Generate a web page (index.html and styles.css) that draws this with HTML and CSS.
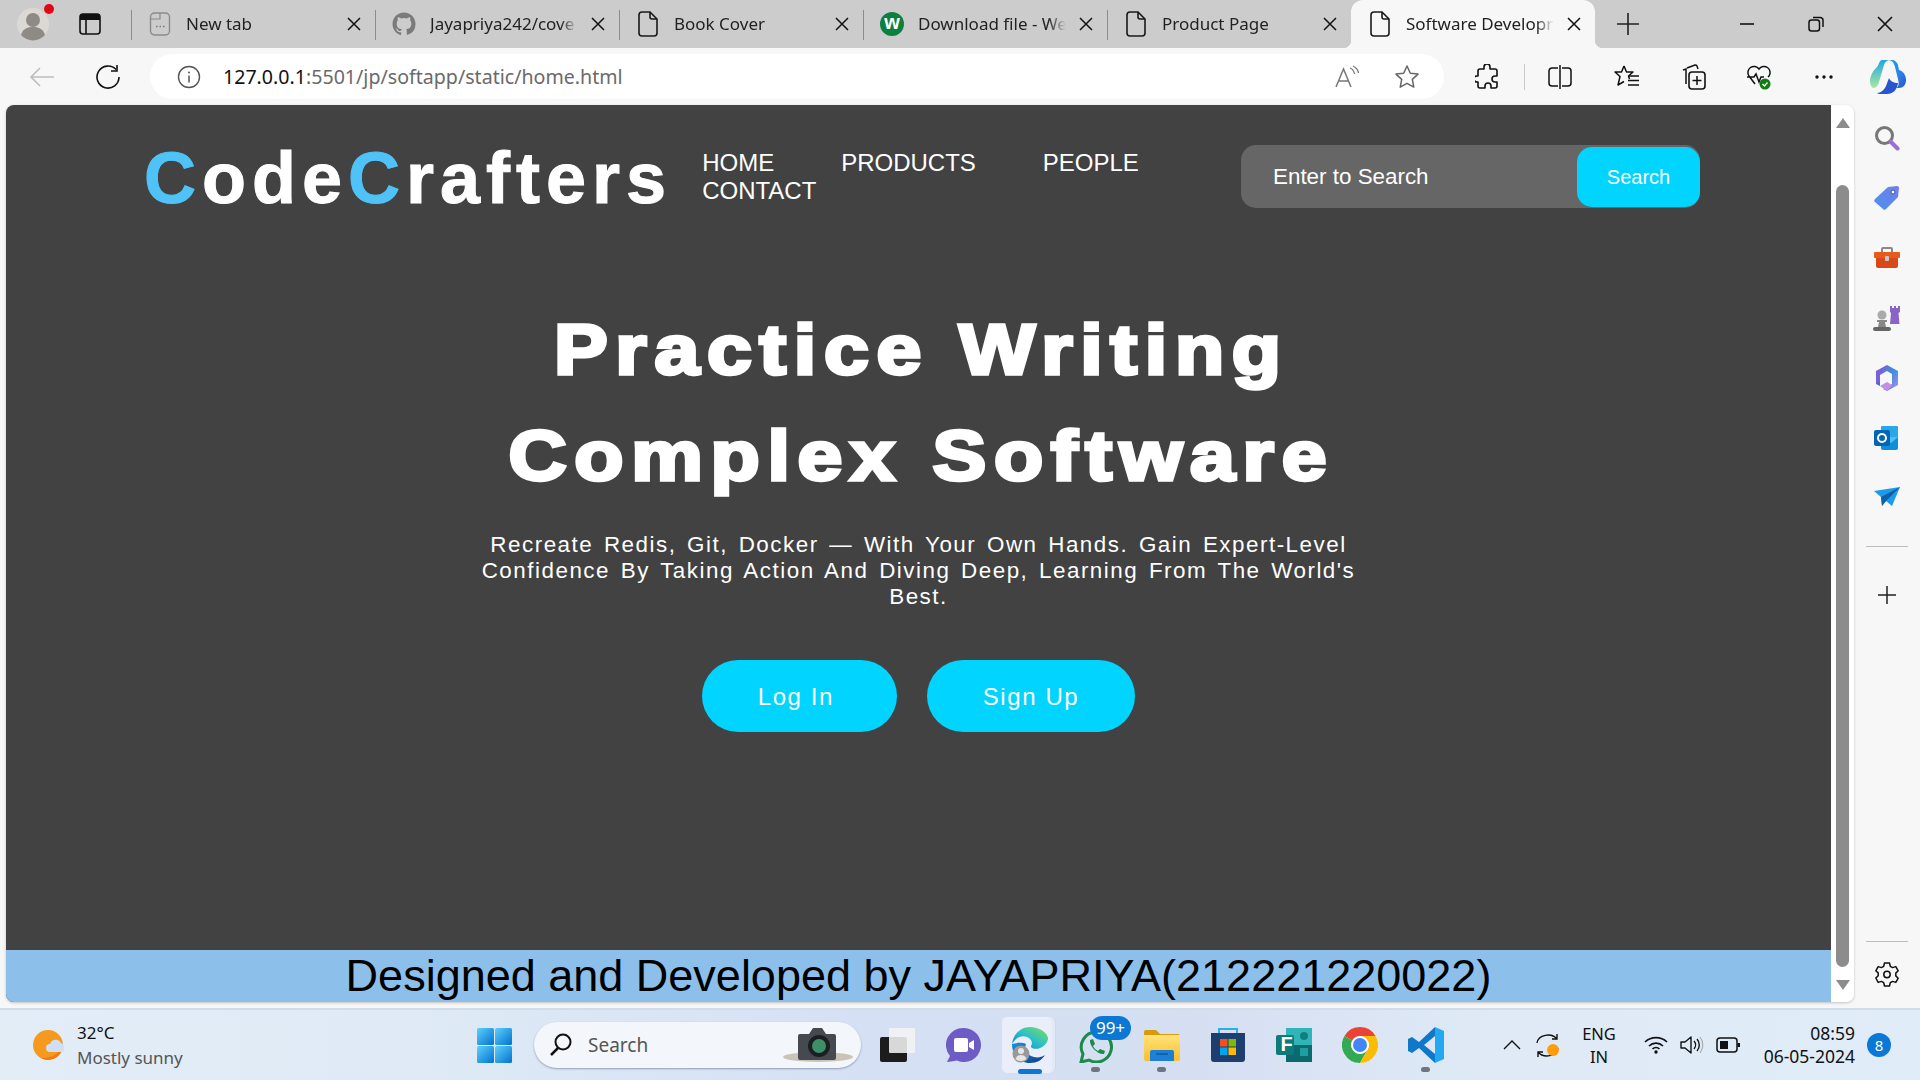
FILE: index.html
```html
<!DOCTYPE html>
<html lang="en">
<head>
    <meta charset="UTF-8">
    <title>Software Development</title>
    <link rel="stylesheet" href="styles.css">
</head>
<body>
    <svg class="defs" width="0" height="0">
        <defs>
            <symbol id="doc" viewBox="0 0 22 26"><path d="M5 1h8l7 7v14a3 3 0 0 1-3 3H5a3 3 0 0 1-3-3V4a3 3 0 0 1 3-3zM13 1v5a2 2 0 0 0 2 2h5" fill="none" stroke="#1a1a1a" stroke-width="1.6"/></symbol>
            <symbol id="close" viewBox="0 0 14 14"><path d="M1 1l12 12M13 1L1 13" fill="none" stroke="#111" stroke-width="1.5"/></symbol>
            <linearGradient id="edgeTop" x1="0" y1="1" x2="1" y2="0"><stop offset="0" stop-color="#0b7fd0"/><stop offset=".5" stop-color="#2cc0c8"/><stop offset="1" stop-color="#7fe05a"/></linearGradient>
            <linearGradient id="edgeLow" x1="0" y1="0" x2="1" y2="1"><stop offset="0" stop-color="#1a90e0"/><stop offset="1" stop-color="#0a3d8c"/></linearGradient>
            <linearGradient id="winBlue" x1="0" y1="0" x2="1" y2="1"><stop offset="0" stop-color="#5fd0fb"/><stop offset="1" stop-color="#0072d0"/></linearGradient>
            <linearGradient id="copilot" x1="0" y1="0" x2="1" y2="1"><stop offset="0" stop-color="#1aa6e8"/><stop offset=".6" stop-color="#2f7fe8"/><stop offset="1" stop-color="#2a4fc8"/></linearGradient>
            <linearGradient id="copilotGreen" x1="0" y1="0" x2="0" y2="1"><stop offset="0" stop-color="#22a8e0"/><stop offset="1" stop-color="#a8e8a0"/></linearGradient>
            <linearGradient id="m365" x1="0" y1="0" x2="1" y2="1"><stop offset="0" stop-color="#7a5fd8"/><stop offset=".5" stop-color="#3f8fe0"/><stop offset="1" stop-color="#b48ae8"/></linearGradient>
            <linearGradient id="tagBlue" x1="0" y1="1" x2="1" y2="0"><stop offset="0" stop-color="#4f8ff0"/><stop offset="1" stop-color="#6f7fe8"/></linearGradient>
            <linearGradient id="folder" x1="0" y1="0" x2="0" y2="1"><stop offset="0" stop-color="#ffe27a"/><stop offset="1" stop-color="#fbc02d"/></linearGradient>
        </defs>
    </svg>

    <div class="tabstrip">
        <div class="avatar">
            <svg width="34" height="34" viewBox="0 0 34 34"><circle cx="17" cy="17" r="16" fill="#dcd8d4"/><circle cx="17" cy="13" r="7" fill="#8e8a85"/><path d="M5 28c2-7 7-8 12-8s10 1 12 8a16 16 0 0 1-24 0z" fill="#8e8a85"/></svg>
            <span class="avatar-dot"></span>
        </div>
        <svg class="tab-actions" width="22" height="22" viewBox="0 0 22 22"><rect x="1" y="1" width="20" height="20" rx="3" fill="none" stroke="#111" stroke-width="1.6"/><path d="M1 4a3 3 0 0 1 3-3h14a3 3 0 0 1 3 3v3H1z" fill="#111"/><path d="M7 7v14" stroke="#111" stroke-width="1.6"/></svg>
        <div class="tabs">
            <div class="tab">
                <svg class="fav" width="22" height="26" viewBox="0 0 22 26"><rect x="1.5" y="2" width="19" height="22" rx="4" fill="none" stroke="#8a8a8a" stroke-width="1.4"/><path d="M2 8h9V2" fill="none" stroke="#8a8a8a" stroke-width="1.2"/><path d="M7 15.5h1.5M10.500 15.500h1.500M14 15.500h1.500" stroke="#777" stroke-width="1.5"/></svg>
                <span class="tab-title">New tab</span>
                <svg class="tab-close"><use href="#close"/></svg>
            </div>
            <div class="tab">
                <svg class="fav" width="24" height="24" viewBox="0 0 24 24"><path fill="#7a7a7a" d="M12 .5C5.65.5.5 5.65.5 12c0 5.080 3.290 9.390 7.860 10.910.570.100.780-.250.780-.550v-2.140c-3.200.700-3.870-1.360-3.870-1.360-.520-1.330-1.280-1.680-1.280-1.680-1.040-.710.080-.700.080-.700 1.150.080 1.760 1.180 1.760 1.180 1.030 1.750 2.690 1.250 3.350.950.100-.740.400-1.250.730-1.540-2.550-.290-5.240-1.280-5.240-5.690 0-1.260.450-2.280 1.180-3.090-.120-.290-.510-1.460.110-3.050 0 0 .970-.310 3.160 1.180a11 11 0 0 1 5.760 0c2.190-1.490 3.160-1.180 3.160-1.180.620 1.590.230 2.760.110 3.050.740.810 1.180 1.830 1.180 3.090 0 4.420-2.690 5.390-5.250 5.680.410.360.780 1.050.780 2.120v3.140c0 .310.210.660.790.550A11.500 11.500 0 0 0 23.500 12C23.500 5.650 18.350.5 12 .5z"/></svg>
                <span class="tab-title">Jayapriya242/cove</span>
                <svg class="tab-close"><use href="#close"/></svg>
            </div>
            <div class="tab">
                <svg class="fav" width="22" height="26"><use href="#doc"/></svg>
                <span class="tab-title">Book Cover</span>
                <svg class="tab-close"><use href="#close"/></svg>
            </div>
            <div class="tab">
                <span class="fav wfav">w</span>
                <span class="tab-title">Download file - We</span>
                <svg class="tab-close"><use href="#close"/></svg>
            </div>
            <div class="tab">
                <svg class="fav" width="22" height="26"><use href="#doc"/></svg>
                <span class="tab-title">Product Page</span>
                <svg class="tab-close"><use href="#close"/></svg>
            </div>
            <div class="tab active">
                <svg class="fav" width="22" height="26"><use href="#doc"/></svg>
                <span class="tab-title">Software Developr</span>
                <svg class="tab-close"><use href="#close"/></svg>
            </div>
        </div>
        <svg class="new-tab" width="22" height="22" viewBox="0 0 22 22"><path d="M11 0v22M0 11h22" stroke="#222" stroke-width="1.6"/></svg>
        <div class="win-controls">
            <svg width="16" height="16" viewBox="0 0 16 16"><path d="M1 8h14" stroke="#111" stroke-width="1.6"/></svg>
            <svg width="16" height="16" viewBox="0 0 16 16"><rect x="1" y="4" width="10.500" height="11" rx="2.500" fill="none" stroke="#111" stroke-width="1.500"/><path d="M5 1.500h7a3 3 0 0 1 3 3V11" fill="none" stroke="#111" stroke-width="1.500"/></svg>
            <svg width="16" height="16" viewBox="0 0 16 16"><path d="M1 1l14 14M15 1L1 15" stroke="#111" stroke-width="1.600"/></svg>
        </div>
    </div>

    <div class="toolbar">
        <svg class="tool-back" width="26" height="22" viewBox="0 0 26 22"><path d="M25 11H2M11 2l-9 9 9 9" fill="none" stroke="#bdbdbd" stroke-width="1.600"/></svg>
        <svg class="tool-reload" width="26" height="26" viewBox="0 0 26 26"><path d="M21 5.500A11 11 0 1 0 24 13" fill="none" stroke="#111" stroke-width="1.600"/><path d="M22 1v6h-6" fill="none" stroke="#111" stroke-width="1.600"/></svg>
        <div class="addressbar">
            <svg width="24" height="24" viewBox="0 0 24 24"><circle cx="12" cy="12" r="10.500" fill="none" stroke="#555" stroke-width="1.400"/><path d="M12 10.500v7" stroke="#555" stroke-width="1.500"/><circle cx="12" cy="7.500" r="1" fill="#555"/></svg>
            <span class="url"><span class="url-host">127.0.0.1</span>:5501/jp/softapp/static/home.html</span>
            <svg class="read-aloud" width="26" height="24" viewBox="0 0 26 24"><path d="M2 22L9.500 4 17 22M4.500 16h10" fill="none" stroke="#777" stroke-width="1.500"/><path d="M16 3c3 1 4 3 4.500 6M19 1c3 1.500 5 4 5.500 7" fill="none" stroke="#777" stroke-width="1.300"/></svg>
            <svg class="star" width="26" height="26" viewBox="0 0 26 26"><path d="M13 2l3.300 7.200 7.700.9-5.700 5.300 1.500 7.700L13 19.300l-6.800 3.800 1.500-7.700L2 10.100l7.700-.9z" fill="none" stroke="#666" stroke-width="1.500" stroke-linejoin="round"/></svg>
        </div>
        <div class="tool-icons">
            <svg class="ti-ext" width="24" height="26" viewBox="0 0 24 26"><path d="M9 3a3 3 0 0 1 6 0v2h5a2 2 0 0 1 2 2v5h-2a3 3 0 0 0 0 6h2v4a2 2 0 0 1-2 2h-4v-2a3 3 0 0 0-6 0v2H5a2 2 0 0 1-2-2v-4h-1a3 3 0 0 1 0-6h1V7a2 2 0 0 1 2-2h4z" fill="none" stroke="#111" stroke-width="1.600" stroke-linejoin="round"/></svg>
            <span class="tool-sep"></span>
            <svg class="ti-split" width="24" height="26" viewBox="0 0 24 26"><path d="M10 4H4a3 3 0 0 0-3 3v12a3 3 0 0 0 3 3h6M14 4h6a3 3 0 0 1 3 3v12a3 3 0 0 1-3 3h-6M12 1v24" fill="none" stroke="#111" stroke-width="1.500"/></svg>
            <svg class="ti-fav" width="26" height="26" viewBox="0 0 26 26"><path d="M10 2l2.500 6H19l-4.500 4 1 3M10 2L7.500 8H1l5 4.500L4 21l6-3.500" fill="none" stroke="#111" stroke-width="1.500" stroke-linejoin="round"/><path d="M15 12h10M14 16.500h11M14 21h11" stroke="#111" stroke-width="1.500"/></svg>
            <svg class="ti-coll" width="26" height="28" viewBox="0 0 26 28"><path d="M7 5l8-3a2 2 0 0 1 2 1l1 3M3 7l3-1v15" fill="none" stroke="#111" stroke-width="1.500"/><rect x="9" y="9" width="16" height="17" rx="3" fill="none" stroke="#111" stroke-width="1.600"/><path d="M17 13v9M12.500 17.500h9" stroke="#111" stroke-width="1.500"/></svg>
            <svg class="ti-health" width="26" height="28" viewBox="0 0 26 28"><path d="M9 21L3 13a6 6 0 0 1 10-7 6 6 0 0 1 10 7l-1 1M1 14h7l2-3 3 8 2-5h3" fill="none" stroke="#111" stroke-width="1.500"/><circle cx="19" cy="21" r="5.500" fill="#107c10"/><path d="M16.500 21l2 2 3-3.500" fill="none" stroke="#fff" stroke-width="1.300"/></svg>
            <svg class="ti-more" width="18" height="4" viewBox="0 0 18 4"><circle cx="2" cy="2" r="1.700" fill="#111"/><circle cx="9" cy="2" r="1.700" fill="#111"/><circle cx="16" cy="2" r="1.700" fill="#111"/></svg>
            <svg class="ti-copilot" width="36" height="36" viewBox="0 0 36 36"><path d="M18 1h4c3 0 5 2 6 5l1 5c4 1 7 5 7 10 0 5-3 8-7 8h-3c3-1 3-5 2-9l-3-12c-1-4-3-7-7-7z" fill="url(#copilot)"/><path d="M7 34c4 0 7-3 9-7l3-8c1 3 5 5 9 5-1 7-5 11-11 11H9z" fill="#2a55d0"/><path d="M12 1h8c-3 0-5 2-6 5l-5 17c-1 4-3 6-6 6-2-1-3-4-3-7 0-5 3-10 6-13 3-2 3-8 6-8z" fill="url(#copilotGreen)"/></svg>
        </div>
    </div>

    <div class="main">
        <div class="viewport">
            <div class="page">
                <header class="site-header">
                    <div class="logo"><span class="logo-c">C</span>ode<span class="logo-c">C</span>rafters</div>
                    <nav class="site-nav">
                        <a>HOME</a>
                        <a>PRODUCTS</a>
                        <a>PEOPLE</a>
                        <a>CONTACT</a>
                    </nav>
                    <form class="search-box">
                        <span class="search-input">Enter to Search</span>
                        <button type="button" class="search-btn">Search</button>
                    </form>
                </header>
                <section class="hero">
                    <h1>Practice Writing<br>Complex Software</h1>
                    <p>Recreate Redis, Git, Docker — With Your Own Hands. Gain Expert-Level Confidence By Taking Action And Diving Deep, Learning From The World's Best.</p>
                    <div class="hero-btns">
                        <button type="button" class="hero-btn login-btn">Log In</button>
                        <button type="button" class="hero-btn">Sign Up</button>
                    </div>
                </section>
                <footer class="site-footer">Designed and Developed by JAYAPRIYA(212221220022)</footer>
            </div>
            <div class="scrollbar">
                <span class="arrow-up"></span>
                <span class="thumb"></span>
                <span class="arrow-down"></span>
            </div>
        </div>
        <aside class="sidebar">
            <svg class="side-icon" width="26" height="26" viewBox="0 0 26 26"><circle cx="10.500" cy="10.500" r="8" fill="none" stroke="#777" stroke-width="3"/><path d="M16.500 16.500l7 7" stroke="#9a6fd8" stroke-width="4" stroke-linecap="round"/></svg>
            <svg class="side-icon" width="26" height="26" viewBox="0 0 26 26"><path d="M14 2l9-1a2 2 0 0 1 2 2l-1 9-12 12a2 2 0 0 1-3 0L1 17a2 2 0 0 1 0-3z" fill="url(#tagBlue)"/><circle cx="19" cy="7" r="2" fill="#fff" stroke="#3a4fb0"/></svg>
            <svg class="side-icon" width="28" height="24" viewBox="0 0 28 24"><path d="M9 6V3a1 1 0 0 1 1-1h8a1 1 0 0 1 1 1v3" fill="none" stroke="#8a8a8a" stroke-width="2"/><rect x="1" y="6" width="26" height="6" rx="1" fill="#e85a1c"/><path d="M3 12h22v8a2 2 0 0 1-2 2H5a2 2 0 0 1-2-2z" fill="#d8481a"/><rect x="12" y="10" width="4" height="5" rx="1" fill="#c8c8c8"/></svg>
            <svg class="side-icon" width="28" height="28" viewBox="0 0 28 28"><path d="M17 2h2v2h2V2h2v2h2V2h2v6l-1.500 1 1 11H17l1-11L17 8z" fill="#8a63c8"/><circle cx="9" cy="11" r="4.500" fill="#aaa"/><path d="M4 16h10v2H12l1 5H5l1-5H4z" fill="#888"/><rect x="0" y="23" width="18" height="4" rx="2" fill="#666"/></svg>
            <svg class="side-icon" width="26" height="28" viewBox="0 0 26 28"><path d="M13 1l11 6v14l-11 6-4-2 9-5V10L13 7 6 11V6z" fill="url(#m365)"/><path d="M2 7l4-1v16l-4-2z" fill="#3f6fd8"/><path d="M6 22l7-4 5 3-5 6z" fill="#c090e8"/><path d="M13 1L2 7v13l4-2V9z" fill="#7a5fd8"/></svg>
            <svg class="side-icon" width="26" height="26" viewBox="0 0 26 26"><rect x="7" y="1" width="17" height="12" rx="1" fill="#28a8ea"/><path d="M7 12h17v11a2 2 0 0 1-2 2H9a2 2 0 0 1-2-2z" fill="#0f8fd8"/><path d="M7 12l10 6 7-6" fill="#50c0f0"/><rect x="0" y="5" width="16" height="16" rx="2" fill="#0364b8"/><circle cx="8" cy="13" r="4" fill="none" stroke="#fff" stroke-width="2"/></svg>
            <svg class="side-icon" width="26" height="22" viewBox="0 0 26 22"><path d="M0 4l26-4-8 19-6-5-4 5-1-9z" fill="#1e9be8"/><path d="M7 10L26 0 12 14l-4 5z" fill="#0f5fa8"/></svg>
            <span class="side-sep"></span>
            <svg class="side-icon side-plus" width="18" height="18" viewBox="0 0 18 18"><path d="M9 0v18M0 9h18" stroke="#222" stroke-width="1.500"/></svg>
            <span class="side-sep side-sep-low"></span>
            <svg class="side-gear" width="24" height="26" viewBox="0 0 24 26"><path d="M9.500 1h5l.8 3.300 2.300 1.300 3.200-1 2.400 4.200-2.400 2.300v2.800l2.400 2.300-2.400 4.200-3.200-1-2.300 1.300-.8 3.300h-5l-.8-3.300-2.300-1.300-3.200 1L.8 16l2.400-2.300v-2.800L.8 8.800l2.400-4.200 3.200 1 2.300-1.300z" fill="none" stroke="#111" stroke-width="1.500" stroke-linejoin="round"/><circle cx="12" cy="12.500" r="3.200" fill="none" stroke="#111" stroke-width="1.500"/></svg>
        </aside>
    </div>

    <div class="taskbar">
        <div class="weather">
            <svg width="33" height="30" viewBox="0 0 33 30"><circle cx="15" cy="15" r="15" fill="#f59a1e"/><path d="M30 15a15 15 0 0 1-15 15A15 15 0 0 1 8 28c10 1 19-5 22-13z" fill="#f27a10"/><path d="M17 22a4 4 0 0 1 0-8 6 6 0 0 1 11-1 5 5 0 0 1 1 9z" fill="#cfe0f6"/></svg>
            <div class="weather-text">
                <span class="temp">32°C</span>
                <span class="sky">Mostly sunny</span>
            </div>
        </div>
        <svg class="win-logo" width="35" height="35" viewBox="0 0 35 35"><rect width="17" height="17" rx="1.500" fill="url(#winBlue)"/><rect x="18" width="17" height="17" rx="1.500" fill="url(#winBlue)"/><rect y="18" width="17" height="17" rx="1.500" fill="url(#winBlue)"/><rect x="18" y="18" width="17" height="17" rx="1.500" fill="url(#winBlue)"/></svg>
        <div class="task-search">
            <svg width="22" height="24" viewBox="0 0 22 24"><circle cx="13" cy="9" r="7.500" fill="none" stroke="#111" stroke-width="2"/><path d="M8 15l-7 7" stroke="#111" stroke-width="2.500"/></svg>
            <span class="task-search-text">Search</span>
            <svg class="camera" width="70" height="36" viewBox="0 0 70 36"><ellipse cx="35" cy="30" rx="35" ry="5" fill="#c9c3b8"/><path d="M17 7h9l4-6h9l4 6h8a2 2 0 0 1 2 2v22a2 2 0 0 1-2 2H17a2 2 0 0 1-2-2V9a2 2 0 0 1 2-2z" fill="#444a50"/><circle cx="36" cy="19" r="11" fill="#1c1f22"/><circle cx="36" cy="19" r="7" fill="#3d8f68"/></svg>
        </div>
        <div class="apps">
            <div class="app">
                <svg width="36" height="36" viewBox="0 0 36 36"><rect y="10" width="27" height="25" rx="2" fill="#1c1c1c"/><rect x="9" y="1" width="26" height="25" rx="1" fill="#f2f2f2" fill-opacity=".88"/></svg>
            </div>
            <div class="app">
                <svg width="36" height="36" viewBox="0 0 36 36"><path d="M18 1a17 17 0 1 1-7 32.500L2 35c-1 0-1-1 0-2l2-4A17 17 0 0 1 18 1z" fill="#6d5cc4"/><rect x="8" y="11" width="14" height="14" rx="2" fill="#fff"/><path d="M23 16l5-3v10l-5-3z" fill="#fff"/></svg>
            </div>
            <div class="app app-active">
                <svg width="36" height="36" viewBox="0 0 36 36"><path d="M18 0C8 0 1 8 0 17c4-7 10-9 15-7 5 2 6 6 4 9-1 2 5 4 9 2 5-2 8-6 8-10C35 5 27 0 18 0z" fill="url(#edgeTop)"/><path d="M0 17c0 11 8 19 18 19 7 0 12-3 15-8-4 3-10 3-14 1-5-2-7-7-5-12-5-2-11-1-14 0z" fill="url(#edgeLow)"/><circle cx="9" cy="27" r="8.500" fill="#999"/><circle cx="9" cy="24" r="3" fill="#e6e6e6"/><path d="M3.500 32c1-3 3-4 5.500-4s4.500 1 5.500 4a8.500 8.500 0 0 1-11 0z" fill="#e6e6e6"/></svg>
            </div>
            <div class="app app-open">
                <svg width="36" height="36" viewBox="0 0 36 36"><path d="M18 5a15 15 0 1 1-7 28l-8 2 2-8A15 15 0 0 1 18 5z" fill="none" stroke="#1e8a4a" stroke-width="3"/><path d="M12 13l3-1 2 5-2 2c1 2 3 4 5 5l2-2 5 2-1 3c-6 1-15-8-14-14z" fill="#1e8a4a"/></svg>
                <span class="badge-99">99+</span>
            </div>
            <div class="app app-open">
                <svg width="36" height="36" viewBox="0 0 36 36"><path d="M0 5a2 2 0 0 1 2-2h10l4 4h18a2 2 0 0 1 2 2v4H0z" fill="#d79a0a"/><path d="M0 8h36v24a2 2 0 0 1-2 2H2a2 2 0 0 1-2-2z" fill="url(#folder)"/><path d="M6 34V25a2 2 0 0 1 2-2h20a2 2 0 0 1 2 2v9z" fill="#1e7fd6"/><path d="M12 27h12" stroke="#0f5a9e" stroke-width="1.500"/></svg>
            </div>
            <div class="app">
                <svg width="36" height="36" viewBox="0 0 36 36"><path d="M9 6V2h18v4" fill="none" stroke="#2ab0e8" stroke-width="2"/><path d="M1 6h34v26a3 3 0 0 1-3 3H4a3 3 0 0 1-3-3z" fill="#1d3f70"/><rect x="10" y="12" width="7.500" height="7.500" fill="#f25022"/><rect x="18.500" y="12" width="7.500" height="7.500" fill="#7fba00"/><rect x="10" y="20.500" width="7.500" height="7.500" fill="#00a4ef"/><rect x="18.500" y="20.500" width="7.500" height="7.500" fill="#ffb900"/></svg>
            </div>
            <div class="app">
                <svg width="36" height="36" viewBox="0 0 36 36"><rect x="10" y="1" width="26" height="17" fill="#2fb5b8"/><rect x="10" y="18" width="26" height="17" fill="#0b6a6e"/><circle cx="28" cy="9" r="4" fill="#0e7f82"/><rect x="24" y="21" width="8" height="8" fill="#1f9ea0"/><rect y="8" width="18" height="20" rx="2" fill="#0e7a7c"/><text class="forms-f" x="4.500" y="24">F</text></svg>
            </div>
            <div class="app">
                <svg width="36" height="36" viewBox="0 0 36 36"><circle cx="18" cy="18" r="18" fill="#fff"/><path d="M18 0A18 18 0 0 1 33.600 9H18a9 9 0 0 0-7.800 4.500L2.400 9A18 18 0 0 1 18 0z" fill="#ea4335"/><path d="M2.400 9A18 18 0 0 0 18 36l7.800-13.500A9 9 0 0 1 10.200 13.500z" fill="#34a853"/><path d="M33.600 9A18 18 0 0 1 18 36l7.800-13.500A9 9 0 0 0 18 9z" fill="#fbbc05"/><circle cx="18" cy="18" r="7" fill="#4285f4"/></svg>
            </div>
            <div class="app app-open">
                <svg width="36" height="36" viewBox="0 0 36 36"><path d="M27 0L11 15 4 10 0 12v12l4 2 7-5 16 15v-9L16 18l11-9z" fill="#0f78c8"/><path d="M27 0l9 4v28l-9 4z" fill="#23a9f2"/></svg>
            </div>
        </div>
        <div class="tray">
            <svg class="tray-caret" width="18" height="10" viewBox="0 0 18 10"><path d="M1 9l8-8 8 8" fill="none" stroke="#111" stroke-width="1.400"/></svg>
            <svg class="tray-sync" width="26" height="26" viewBox="0 0 26 26"><path d="M2 11a11 9 0 0 1 20-4M22 2v5h-5M23 16a11 9 0 0 1-20 4M3 25v-5h5" fill="none" stroke="#111" stroke-width="1.400"/><circle cx="18" cy="18" r="6" fill="#ff9d0a"/></svg>
            <div class="lang"><span>ENG</span><span>IN</span></div>
            <svg class="tray-wifi" width="24" height="18" viewBox="0 0 24 18"><path d="M1 6a16 16 0 0 1 22 0M5 10a10 10 0 0 1 14 0M8.500 13a5 5 0 0 1 7 0" fill="none" stroke="#111" stroke-width="1.600"/><circle cx="12" cy="16" r="1.700" fill="#111"/></svg>
            <svg class="tray-vol" width="24" height="20" viewBox="0 0 24 20"><path d="M1 7h4l6-5v16l-6-5H1z" fill="none" stroke="#111" stroke-width="1.400" stroke-linejoin="round"/><path d="M14 6a6 6 0 0 1 0 8M17 4a9 9 0 0 1 0 12" fill="none" stroke="#111" stroke-width="1.400"/><path d="M20 2a13 13 0 0 1 0 16" fill="none" stroke="#aaa" stroke-width="1.200"/></svg>
            <svg class="tray-batt" width="24" height="16" viewBox="0 0 24 16"><rect x="1" y="1" width="20" height="14" rx="3" fill="none" stroke="#111" stroke-width="1.500"/><rect x="4" y="4" width="8" height="8" fill="#111"/><rect x="21.500" y="6" width="2.500" height="4" fill="#111"/></svg>
            <div class="clock"><span>08:59</span><span>06-05-2024</span></div>
            <span class="notif">8</span>
        </div>
    </div>
</body>
</html>
```

FILE: styles.css
```css
* {
    margin: 0;
    padding: 0;
    box-sizing: border-box;
}
html, body {
    width: 1920px;
    height: 1080px;
    overflow: hidden;
}
body {
    display: flex;
    flex-direction: column;
    font-family: "Noto Sans", sans-serif;
    color: #111;
    background-color: #f7f7f7;
}
.defs {
    position: absolute;
}

/* tabs */
.tabstrip {
    display: flex;
    align-items: center;
    height: 48px;
    background-color: #cccccc;
    flex: none;
}
.avatar {
    position: relative;
    width: 34px;
    height: 34px;
    margin-left: 16px;
}
.avatar-dot {
    position: absolute;
    top: -3px;
    right: -4px;
    width: 10px;
    height: 10px;
    border-radius: 50%;
    background-color: #e30613;
}
.tab-actions {
    margin-left: 29px;
}
.tabs {
    display: flex;
    align-self: stretch;
    margin-left: 30px;
}
.tab {
    position: relative;
    display: flex;
    align-items: center;
    width: 244px;
    height: 48px;
    padding-left: 17px;
}
.tab::before {
    content: "";
    position: absolute;
    left: 0;
    top: 10px;
    height: 30px;
    width: 1px;
    background-color: #8c8c8c;
}
.tab.active {
    background-color: #f7f7f7;
    border-radius: 12px 12px 0 0;
}
.tab.active::before,
.tab.active::after {
    content: "";
    position: absolute;
    bottom: 0;
    top: auto;
    width: 8px;
    height: 8px;
    background: radial-gradient(circle at 0 0, #ccc 8px, #f7f7f7 8.500px);
}
.tab.active::before {
    left: -8px;
}
.tab.active::after {
    right: -8px;
    background: radial-gradient(circle at 100% 0, #ccc 8px, #f7f7f7 8.500px);
}
.fav {
    flex: none;
    width: 24px;
}
.wfav {
    display: block;
    width: 24px;
    height: 24px;
    border-radius: 50%;
    background-color: #0d7f3f;
    color: #fff;
    font-family: "Liberation Sans", sans-serif;
    font-weight: bold;
    font-size: 20px;
    line-height: 21px;
    text-align: center;
}
.tab-title {
    width: 148px;
    margin-left: 14px;
    margin-bottom: 2px;
    overflow: hidden;
    white-space: nowrap;
    font-size: 17px;
    color: #222;
    -webkit-mask-image: linear-gradient(to right, #000 88%, transparent 100%);
    mask-image: linear-gradient(to right, #000 88%, transparent 100%);
}
.tab-close {
    flex: none;
    width: 14px;
    height: 14px;
    margin-left: 13px;
}
.new-tab {
    margin-left: 22px;
}
.win-controls {
    display: flex;
    gap: 53px;
    margin-left: auto;
    margin-right: 27px;
}

/* toolbar */
.toolbar {
    display: flex;
    align-items: center;
    height: 57px;
    flex: none;
    background-color: #f7f7f7;
}
.tool-back {
    margin-left: 29px;
}
.tool-reload {
    margin-left: 40px;
}
.addressbar {
    display: flex;
    align-items: center;
    width: 1294px;
    height: 45px;
    margin-left: 29px;
    padding-left: 27px;
    background-color: #fff;
    border-radius: 23px;
}
.url {
    margin-left: 22px;
    font-size: 19.600px;
    color: #6a6a6a;
}
.url-host {
    color: #111;
}
.read-aloud {
    margin-left: auto;
}
.star {
    margin-left: 34px;
    margin-right: 24px;
}
.tool-icons {
    display: flex;
    align-items: center;
    flex: 1;
}
.ti-ext {
    margin-left: 31px;
}
.tool-sep {
    width: 1px;
    height: 26px;
    margin-left: 25px;
    background-color: #c8c8c8;
}
.ti-split {
    margin-left: 23px;
}
.ti-fav {
    margin-left: 42px;
}
.ti-coll {
    margin-left: 40px;
}
.ti-health {
    margin-left: 40px;
}
.ti-more {
    margin-left: 43px;
}
.ti-copilot {
    margin-left: 37px;
}

/* page */
.main {
    display: flex;
    height: 903px;
    flex: none;
    padding: 0 0 6px 6px;
    background-color: #f7f7f7;
}
.viewport {
    display: flex;
    width: 1848px;
    border-radius: 8px;
    overflow: hidden;
    box-shadow: 0 1px 3px rgba(0, 0, 0, 0.22);
}
.page {
    display: flex;
    flex-direction: column;
    width: 1825px;
    background-color: #424242;
    font-family: "Liberation Sans", Arial, sans-serif;
    color: #fff;
}
.site-header {
    display: flex;
    align-items: flex-start;
    padding: 32px 131px 0 138px;
    height: 104px;
}
.logo {
    font-size: 72px;
    font-weight: bold;
    letter-spacing: 6px;
    line-height: 83px;
    white-space: nowrap;
    -webkit-text-stroke: 1px;
}
.logo-c {
    color: #4fc3f7;
}
.site-nav {
    display: flex;
    flex-wrap: wrap;
    column-gap: 67px;
    width: 460px;
    margin-left: 30px;
    margin-top: 12px;
    font-size: 24px;
    line-height: 28px;
}
.search-box {
    display: flex;
    align-items: center;
    justify-content: space-between;
    width: 459px;
    height: 63px;
    margin-left: auto;
    margin-top: 8px;
    padding-left: 32px;
    background-color: #666666;
    border-radius: 15px;
}
.search-input {
    font-size: 22.400px;
}
.search-btn {
    width: 123px;
    height: 60px;
    margin-top: 1px;
    border: none;
    border-radius: 15px;
    background-color: #00d4ff;
    color: #fff;
    font-family: inherit;
    font-size: 20px;
}
.hero {
    display: flex;
    flex-direction: column;
    align-items: center;
    flex: 1;
    padding-top: 89px;
    text-align: center;
}
/* the bold face is too thin for this heading, so widen and thicken it */
.hero h1 {
    padding-left: 5px;
    font-size: 70px;
    letter-spacing: 6.700px;
    line-height: 105.600px;
    -webkit-text-stroke: 3.500px #fff;
    transform: scaleX(1.15);
}
.hero p {
    width: 900px;
    margin-top: 23px;
    font-size: 22.400px;
    letter-spacing: 1.500px;
    word-spacing: 3px;
}
.hero-btns {
    display: flex;
    gap: 30px;
    margin-top: 50px;
}
.hero-btn {
    height: 72px;
    padding: 1px 56px 0;
    border: none;
    border-radius: 36px / 36px;
    background-color: #00d4ff;
    color: #fff;
    font-family: inherit;
    font-size: 24px;
    letter-spacing: 1.600px;
    text-align: left;
}
.login-btn {
    width: 195px;
}
.site-footer {
    height: 52px;
    background-color: #8dbfeb;
    color: #000;
    font-size: 45px;
    line-height: 52px;
    text-align: center;
}
.scrollbar {
    position: relative;
    display: flex;
    flex-direction: column;
    align-items: center;
    width: 23px;
    background-color: #fff;
}
.arrow-up,
.arrow-down {
    width: 0;
    height: 0;
    border-left: 7.500px solid transparent;
    border-right: 7.500px solid transparent;
}
.arrow-up {
    margin-top: 13px;
    border-bottom: 10px solid #8c8c8c;
}
.thumb {
    width: 13px;
    height: 782px;
    margin-top: 57px;
    border-radius: 7px;
    background-color: #8c8c8c;
}
.arrow-down {
    margin-top: 13px;
    border-top: 10px solid #8c8c8c;
}

/* edge sidebar */
.sidebar {
    display: flex;
    flex-direction: column;
    align-items: center;
    width: 66px;
    height: 897px;
    padding-top: 3px;
}
.side-icon {
    flex: 0 0 60px;
}
.side-sep {
    flex: none;
    width: 42px;
    height: 1px;
    margin-top: 18px;
    background-color: #bdbdbd;
}
.side-plus {
    margin-top: 18px;
}
.side-sep-low {
    margin-top: auto;
    margin-bottom: 6px;
}
.side-gear {
    flex: 0 0 54px;
}

/* windows taskbar */
.taskbar {
    display: flex;
    align-items: center;
    height: 72px;
    flex: none;
    border-top: 2px solid #d3dbe8;
    background: linear-gradient(90deg, #e3edf6 0%, #dfeaf6 22%, #d5e0f4 45%, #d6dff2 62%, #dfeaf6 78%, #e0ecf7 100%);
}
.weather {
    display: flex;
    align-items: center;
    width: 477px;
    padding-left: 33px;
}
.weather-text {
    display: flex;
    flex-direction: column;
    margin-left: 11px;
    font-size: 17px;
    line-height: 25px;
}
.sky {
    color: #555;
}
.win-logo {
    flex: none;
}
.task-search {
    display: flex;
    align-items: center;
    width: 327px;
    height: 46px;
    margin-left: 22px;
    padding-left: 16px;
    border-radius: 23px;
    background-color: #f3f6fb;
    box-shadow: 0 1px 2px rgba(90, 100, 130, 0.55);
}
.task-search-text {
    margin-left: 16px;
    font-size: 19px;
    color: #555;
}
.camera {
    margin-left: auto;
    margin-right: 8px;
}
.apps {
    display: flex;
    gap: 30px;
    margin-left: 19px;
}
.app {
    position: relative;
    width: 36px;
    height: 36px;
}
.app svg {
    position: relative;
    display: block;
}
.app-active::before {
    content: "";
    position: absolute;
    left: -10px;
    top: -10px;
    width: 50px;
    height: 56px;
    border-radius: 5px;
    background-color: #e9eef8;
    box-shadow: 3px 0 0 #e2e8f5, 4px 0 0 #cfd7e8;
}
.app-active::after,
.app-open::after {
    content: "";
    position: absolute;
    left: 13px;
    bottom: -9px;
    width: 9px;
    height: 5px;
    border-radius: 3px;
    background-color: #6f7580;
}
.app-active::after {
    left: 6px;
    bottom: -11px;
    width: 24px;
    background-color: #0a78d4;
}
.badge-99 {
    position: absolute;
    left: 12px;
    top: -11px;
    width: 41px;
    height: 24px;
    border-radius: 12px;
    background-color: #0a78d4;
    color: #fff;
    font-size: 17px;
    line-height: 24px;
    text-align: center;
}
.forms-f {
    fill: #fff;
    font-family: "Liberation Sans", sans-serif;
    font-size: 20px;
    font-weight: bold;
}
.tray {
    display: flex;
    align-items: center;
    flex: 1;
    margin-left: 59px;
}
.tray-sync {
    margin-left: 14px;
}
.lang {
    display: flex;
    flex-direction: column;
    align-items: center;
    width: 50px;
    margin-left: 13px;
    font-size: 16.500px;
    line-height: 23px;
}
.tray-wifi {
    margin-left: 20px;
}
.tray-vol {
    margin-left: 12px;
}
.tray-batt {
    margin-left: 12px;
}
.clock {
    display: flex;
    flex-direction: column;
    align-items: flex-end;
    width: 115px;
    font-size: 17.500px;
    line-height: 23px;
}
.notif {
    width: 24px;
    height: 24px;
    margin-left: 12px;
    border-radius: 50%;
    background-color: #0a78d4;
    color: #fff;
    font-size: 15px;
    line-height: 24px;
    text-align: center;
}
```
